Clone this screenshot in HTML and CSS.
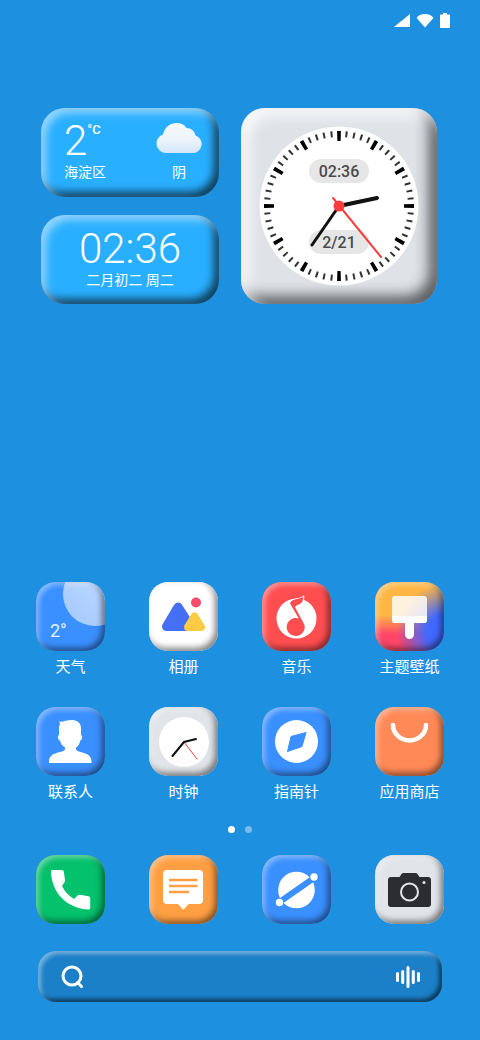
FILE: index.html
```html
<!DOCTYPE html>
<html lang="zh-CN">
<head>
    <meta charset="UTF-8">
    <meta name="viewport" content="width=device-width, initial-scale=1.0">
    <title>桌面</title>
    <link rel="stylesheet" href="styles.css">
</head>
<body>
    <header class="status-bar">
        <svg width="18" height="16" viewBox="0 0 18 16"><path d="M17 1v13H1z"/></svg>
        <svg width="18" height="16" viewBox="0 0 18 16"><path d="M9 14.500 .6 5C2 2.600 5.300 1 9 1s7 1.600 8.400 4z"/></svg>
        <svg width="12" height="16" viewBox="0 0 12 16"><path d="M4 0h4v1.500h2q1 0 1 1V14q0 1-1 1H2q-1 0-1-1V2.500q0-1 1-1h2z"/></svg>
    </header>

    <main class="home">
        <section class="widgets">
            <a class="card weather" href="#">
                <div class="weather-now">
                    <div class="temp"><span class="big">2</span><span class="unit">°C</span></div>
                    <div class="caption">海淀区</div>
                </div>
                <div class="weather-sky">
                    <svg class="cloud" width="46" height="32" viewBox="0 0 46 32">
                        <defs>
                            <linearGradient id="cloud" x1="0" y1="0" x2="0" y2="1">
                                <stop offset="0" stop-color="#f6f9fd"/>
                                <stop offset=".55" stop-color="#eef4fb"/>
                                <stop offset="1" stop-color="#d3e7fa"/>
                            </linearGradient>
                        </defs>
                        <path fill="url(#cloud)" d="M10 31A9.500 9.500 0 0 1 7 12.500C9 5 14 1 20.500 1c4.500 0 8 1.800 10 5 5 .2 8 3 9 7.500A9 9 0 0 1 36 31z"/>
                    </svg>
                    <div class="caption">阴</div>
                </div>
            </a>
            <a class="card datetime" href="#">
                <div class="big">02:36</div>
                <div class="caption">二月初二 周二</div>
            </a>
            <a class="card clock" href="#">
                <svg class="dial" viewBox="-80 -80 160 160">
                    <circle r="79.500" fill="#fff"/>
                    <circle class="minor" r="72" pathLength="360"/>
                    <circle class="major" r="70" pathLength="360"/>
                    <rect class="pill" x="-30" y="-47" width="60" height="24" rx="12"/>
                    <rect class="pill" x="-30" y="24" width="60" height="24" rx="12"/>
                    <text x="0" y="-29">02:36</text>
                    <text x="0" y="42">2/21</text>
                    <path d="M0 0 38-8" stroke="#111" stroke-width="4"/>
                    <path d="M0 0-27 39" stroke="#111" stroke-width="3"/>
                    <path d="M-6-8 42 51" stroke="#ff3b3b" stroke-width="2"/>
                    <circle r="5.500" fill="#ff3b3b"/>
                </svg>
            </a>
        </section>

        <nav class="apps">
            <a class="app" href="#">
                <span class="tile blue">
                    <svg viewBox="0 0 69 69">
                        <defs>
                            <linearGradient id="moon" x1="0" y1="1" x2="1" y2="0">
                                <stop offset="0" stop-color="#a3c9ff"/>
                                <stop offset="1" stop-color="#c6deff"/>
                            </linearGradient>
                        </defs>
                        <circle cx="59" cy="12" r="32" fill="url(#moon)"/>
                        <text class="degree" x="14" y="55">2°</text>
                    </svg>
                </span>
                天气
            </a>
            <a class="app" href="#">
                <span class="tile white">
                    <svg viewBox="0 0 69 69" stroke-linejoin="round">
                        <path d="M29 25 41.500 44.500h-24z" fill="#456ff5" stroke="#456ff5" stroke-width="9"/>
                        <path d="M45.500 34.500 52 45H39z" fill="#fbcb45" stroke="#fbcb45" stroke-width="8"/>
                        <circle cx="47" cy="20.500" r="5" fill="#f94c6b"/>
                    </svg>
                </span>
                相册
            </a>
            <a class="app" href="#">
                <span class="tile red">
                    <svg viewBox="0 0 69 69">
                        <circle cx="34.500" cy="36.500" r="20" fill="#fff"/>
                        <path d="M27 21.500c.4-2.500 3-4.300 6.500-5C37 15.700 40 15.500 42 13c1 4.500-.5 9-4.500 11-3 1-4.800 1-4.300 2.500z" fill="#fff"/>
                        <path d="M28 21.500c.7-3 4-3.900 7-4.500 2.700-.5 5-1 6.300-2.200.3 3.500-1.300 6.500-4.300 7.700-2.500 1-4.300 1.300-3.500 3.500l9 17A9 9 0 1 1 36.800 36.500z" fill="#ff4e50"/>
                    </svg>
                </span>
                音乐
            </a>
            <a class="app" href="#">
                <span class="tile theme">
                    <svg viewBox="0 0 69 69">
                        <rect x="17" y="14" width="35" height="27" rx="3" fill="#fff" fill-opacity=".82"/>
                        <path d="M17 34h35v4q0 3-3 3H39v11.500a4.500 4.500 0 0 1-9 0V41H20q-3 0-3-3z" fill="#fff"/>
                    </svg>
                </span>
                主题壁纸
            </a>
            <a class="app" href="#">
                <span class="tile blue">
                    <svg viewBox="0 0 69 69" fill="#fff">
                        <path d="M23 28v-7c0-2 .8-3.500 1-4l-.7-2.500c2.200.4 4-.2 6.200-.8 8-2 15.500 0 15.500 7.500V28c1.700.2 1.500 5-.7 5.500-.6 3.500-2 5.500-4.300 7v2c1 2 4.500 2.300 8 3.500 5 1.600 7.500 4 7.500 8.500V56H13v-1.500c0-4.500 2.500-6.900 7.500-8.500 3.500-1.200 7.500-1.500 8.500-3.500v-2c-2.700-1.500-4.200-3.500-5-7-2.400-.5-2.700-5.300-1-5.500z"/>
                    </svg>
                </span>
                联系人
            </a>
            <a class="app" href="#">
                <span class="tile silver">
                    <svg viewBox="0 0 69 69" stroke-linecap="round">
                        <circle cx="35" cy="35" r="25" fill="#fff"/>
                        <path d="M35 35 48 52" stroke="#ff3b3b" stroke-width="1"/>
                        <path d="M23.500 49 35 35l12-3" fill="none" stroke="#111" stroke-width="2"/>
                    </svg>
                </span>
                时钟
            </a>
            <a class="app" href="#">
                <span class="tile blue">
                    <svg viewBox="0 0 69 69">
                        <circle cx="34.500" cy="34.500" r="21.500" fill="#fff"/>
                        <path d="M44 25.500 40 39.500 25.500 44.500 29 29.500z" fill="#3a90ff" stroke="#3a90ff" stroke-linejoin="round"/>
                    </svg>
                </span>
                指南针
            </a>
            <a class="app" href="#">
                <span class="tile coral">
                    <svg viewBox="0 0 69 69">
                        <path d="M18 18a16.500 15.500 0 0 0 33 0" fill="none" stroke="#fff" stroke-width="4.500" stroke-linecap="round"/>
                    </svg>
                </span>
                应用商店
            </a>
        </nav>

        <div class="pages">
            <button class="dot active" aria-label="第1页"></button>
            <button class="dot" aria-label="第2页"></button>
        </div>

        <nav class="dock">
            <a class="app" href="#" aria-label="电话">
                <span class="tile green">
                    <svg viewBox="0 0 69 69" fill="#fff">
                        <path d="M16.500 15H26q1.500 0 1.800 1.500L29 25q.2 1.500-.7 2.500L26 31c3 6 7 10 12 13l3.500-3.500q1-1 2.500-.8l8.500 1.500q1.700.3 1.700 2V53q0 1.700-1.700 1.600C31 53.500 15.500 38 15 16.600Q15 15 16.500 15z"/>
                    </svg>
                </span>
            </a>
            <a class="app" href="#" aria-label="短信">
                <span class="tile orange">
                    <svg viewBox="0 0 69 69">
                        <path d="M18 15h32q4 0 4 4v26q0 4-4 4H39.500l-4 4.800q-1.200 1.200-2.400 0L29 49H18q-4 0-4-4V19q0-4 4-4z" fill="#fff"/>
                        <path d="M20 25h28.500M20 31h28.500M20 37h20" stroke="#ff9f43" stroke-width="2.500"/>
                    </svg>
                </span>
            </a>
            <a class="app" href="#" aria-label="浏览器">
                <span class="tile blue">
                    <svg viewBox="0 0 69 69">
                        <circle cx="34.500" cy="35" r="18.300" fill="#fff"/>
                        <path d="M19 46 50.500 24" stroke="#3a90ff" stroke-width="6"/>
                        <circle cx="17.500" cy="47.500" r="3.700" fill="#fff"/>
                        <circle cx="52" cy="22" r="3.700" fill="#fff"/>
                    </svg>
                </span>
            </a>
            <a class="app" href="#" aria-label="相机">
                <span class="tile silver">
                    <svg viewBox="0 0 69 69">
                        <path d="M16 22h8.500l2-3q.8-1 2-1h12q1.200 0 2 1l2 3H53q3 0 3 3v24q0 3-3 3H16q-3 0-3-3V25q0-3 3-3z" fill="#2b2d33"/>
                        <circle cx="34.500" cy="37" r="8.500" fill="none" stroke="#e3e6ea" stroke-width="2"/>
                        <circle cx="49" cy="27.500" r="1.500" fill="#e3e6ea"/>
                    </svg>
                </span>
            </a>
        </nav>

        <form class="search">
            <button type="button" aria-label="搜索">
                <svg width="24" height="24" viewBox="0 0 24 24" fill="none" stroke="#fff" stroke-width="3" stroke-linecap="round">
                    <circle cx="11" cy="11" r="9"/>
                    <path d="m16.500 17.500 4 4"/>
                </svg>
            </button>
            <input type="search" aria-label="搜索">
            <button type="button" aria-label="语音">
                <svg width="26" height="24" viewBox="0 0 26 24" stroke="#fff" stroke-width="3" stroke-linecap="round">
                    <path d="M2.500 8.500v7M7.700 6.500v11M13 2.500v19M18.300 6.500v11M23.500 8.500v7"/>
                </svg>
            </button>
        </form>
    </main>
</body>
</html>
```
FILE: styles.css
```css
* {
    box-sizing: border-box;
}
body {
    margin: 0;
    min-height: 100vh;
    display: flex;
    flex-direction: column;
    background: #1e90e0;
    color: #fff;
    font-family: Roboto, "Noto Sans CJK SC", sans-serif;
}
a {
    color: inherit;
    text-decoration: none;
}
svg {
    display: block;
}
button {
    border: none;
    padding: 0;
    background: none;
    cursor: pointer;
}
.status-bar {
    display: flex;
    justify-content: flex-end;
    gap: 5px;
    padding: 13px 29px 0 0;
    fill: #fff;
}
.home {
    flex: 1;
    display: flex;
    flex-direction: column;
    padding: 79px 14px 38px;
}

/* widgets */
.widgets {
    display: grid;
    grid-template-columns: 178fr 196fr;
    grid-template-rows: 1fr 1fr;
    gap: 18px 22px;
    padding: 0 29px 0 27px;
}
.card {
    border-radius: 24px;
    background: #29afff;
    box-shadow:
        inset 5px 5px 8px rgba(255, 255, 255, 0.5),
        inset -5px -5px 9px rgba(0, 0, 0, 0.65);
}
.big {
    font-size: 42px;
    font-weight: 300;
    line-height: 42px;
}
.caption {
    font-size: 14px;
    line-height: 20px;
}
.weather {
    display: flex;
    justify-content: space-between;
    padding: 12px 17px 15px 23px;
}
.temp {
    display: flex;
}
.unit {
    font-size: 13px;
    font-weight: 500;
    line-height: 20px;
}
.weather-now,
.weather-sky {
    display: flex;
    flex-direction: column;
    justify-content: space-between;
}
.weather-sky {
    align-items: center;
}
.cloud {
    margin-top: 2px;
}
.datetime {
    padding: 13px 0;
    text-align: center;
}
.clock {
    grid-column: 2;
    grid-row: 1 / 3;
    padding: 18px;
    background: #dfe3e8;
    box-shadow:
        inset 8px 8px 14px rgba(255, 255, 255, 0.75),
        inset -8px -8px 14px rgba(0, 0, 0, 0.6);
}
.dial {
    width: 100%;
    stroke-linecap: round;
}
.dial text {
    font-size: 16px;
    font-weight: 500;
    text-anchor: middle;
    fill: #4a4a4a;
}
.pill {
    fill: #e6e6e6;
}
.minor,
.major {
    fill: none;
    stroke-linecap: butt;
}
.minor {
    stroke: #333;
    stroke-width: 6;
    stroke-dasharray: 1.6 4.4;
    stroke-dashoffset: 0.8;
}
.major {
    stroke: #000;
    stroke-width: 10;
    stroke-dasharray: 3 27;
    stroke-dashoffset: 1.5;
}

/* app grid */
.apps,
.dock {
    display: grid;
    grid-template-columns: repeat(4, 1fr);
    row-gap: 30px;
}
.apps {
    margin-top: auto;
}
.app {
    display: flex;
    flex-direction: column;
    align-items: center;
    gap: 6px;
    font-size: 15px;
    line-height: 20px;
}
.tile {
    position: relative;
    width: 69px;
    height: 69px;
    border-radius: 19px;
    overflow: hidden;
}
/* bevel sits over the artwork */
.tile::after {
    content: "";
    position: absolute;
    inset: 0;
    border-radius: inherit;
    box-shadow:
        inset 3px 3px 5px rgba(255, 255, 255, 0.4),
        inset -3px -3px 6px rgba(0, 0, 0, 0.5);
}
.blue { background: #3a90ff; }
.white { background: #fff; }
.red { background: #ff4e50; }
.silver { background: #e1e5e9; }
.coral { background: #ff8a57; }
.green { background: #04c16c; }
.orange { background: #ff9f43; }
.theme {
    background:
        radial-gradient(circle at 100% 72%, #4169ff 20%, rgba(65, 105, 255, 0) 56%),
        linear-gradient(#ffb643 48%, #ff4668 76%);
}
.degree {
    font-size: 18px;
    fill: #e4f0ff;
}
.pages {
    display: flex;
    justify-content: center;
    gap: 10px;
    margin: 24px 0 22px;
}
.dot {
    width: 7px;
    height: 7px;
    border-radius: 50%;
    background: rgba(255, 255, 255, 0.4);
}
.dot.active {
    background: #fff;
}

/* search */
.search {
    display: flex;
    align-items: center;
    height: 51px;
    margin: 27px 24px 0;
    padding: 0 21px 0 23px;
    border-radius: 18px;
    background: #1b80c8;
    box-shadow:
        inset 3px 3px 4px rgba(255, 255, 255, 0.4),
        inset -3px -3px 4px rgba(0, 0, 0, 0.55);
}
.search input {
    flex: 1;
    min-width: 0;
    border: none;
    outline: none;
    background: none;
    color: #fff;
    font: inherit;
}
```
